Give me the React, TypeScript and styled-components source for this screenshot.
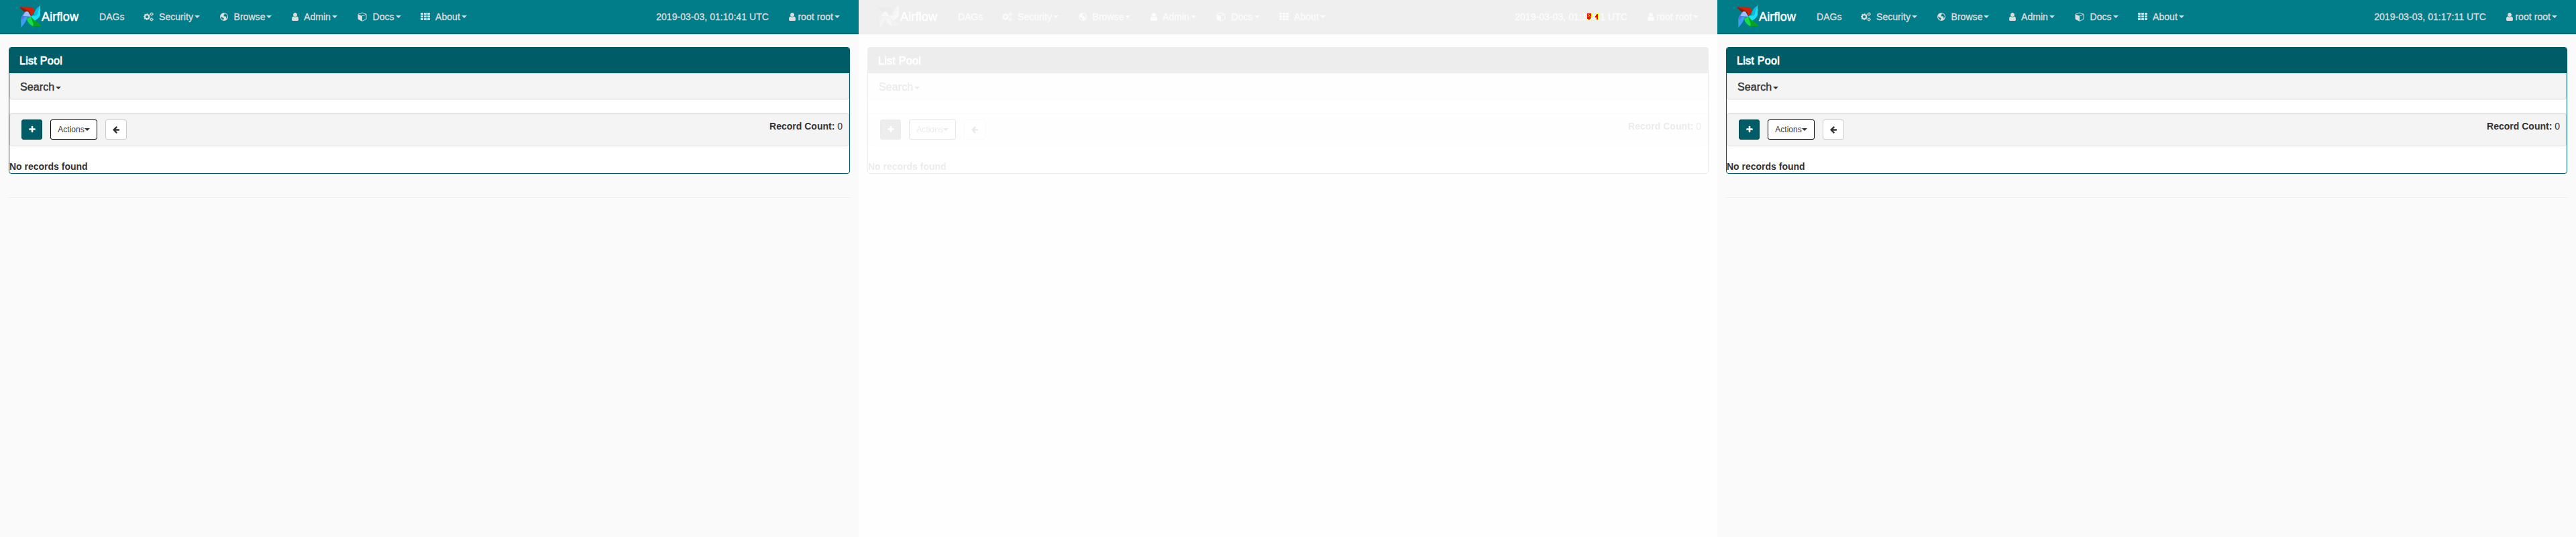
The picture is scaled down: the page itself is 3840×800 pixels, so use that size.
import React from "react";
import styled, { createGlobalStyle, css } from "styled-components";

const GlobalStyle = createGlobalStyle`
  * { box-sizing: border-box; }
  body {
    margin: 0;
    background: #fff;
    font-family: "Liberation Sans", Arial, sans-serif;
    font-size: 14px;
    line-height: 20px;
    color: #333;
  }
`;

const Strip = styled.div`
  display: flex;
  width: 3840px;
  height: 800px;
  overflow: hidden;
`;

const Screen = styled.section<{ $faded?: boolean }>`
  width: 1280px;
  height: 800px;
  background: #fafafa;
  ${(p) => p.$faded && css`filter: grayscale(1) opacity(0.1);`}
`;

const FadedSlot = styled.div`
  position: relative;
  width: 1280px;
  height: 800px;
`;

const MarkLayer = styled.svg`
  position: absolute;
  left: 1085px;
  top: 20px;
`;

const Navbar = styled.nav`
  display: flex;
  align-items: center;
  height: 51px;
  padding: 0 28px 0 29px;
  background: #017c89;
  border-bottom: 1px solid #005660;
  color: #ddd;
`;

const Brand = styled.a`
  display: flex;
  align-items: center;
  width: 119px;
  color: #fff;
`;

const BrandName = styled.span`
  font-size: 18px;
  letter-spacing: 0.15px;
  -webkit-text-stroke: 0.5px currentColor;
`;

const NavItem = styled.a<{ $width?: number }>`
  display: flex;
  align-items: center;
  white-space: nowrap;
  width: ${(p) => (p.$width ? `${p.$width}px` : "auto")};
  letter-spacing: 0.05px;
  -webkit-text-stroke: 0.35px currentColor;
`;

const IconSlot = styled.span<{ $width: number }>`
  display: flex;
  align-items: center;
  width: ${(p) => p.$width}px;
  height: 16px;
`;

const Caret = styled.span<{ $gap?: number }>`
  display: inline-block;
  margin-left: ${(p) => p.$gap ?? 2}px;
  border-top: 4px solid currentColor;
  border-left: 4px solid transparent;
  border-right: 4px solid transparent;
  vertical-align: middle;
`;

const NavRight = styled.div`
  display: flex;
  margin-left: auto;
  gap: 28px;
`;

const Content = styled.main`
  padding: 19px 13px 0;
`;

const Panel = styled.div`
  height: 189px;
  background: #fff;
  border: 1px solid #005c66;
  border-radius: 4px;
  overflow: hidden;
`;

const PanelHeading = styled.h4`
  height: 38px;
  margin: 0;
  padding: 10px 15px;
  background: #005c66;
  color: #fff;
  font-size: 16px;
  font-weight: 400;
  line-height: 20px;
  letter-spacing: 0.3px;
  -webkit-text-stroke: 0.75px currentColor;
`;

const SearchBar = styled.div`
  height: 39px;
  padding: 10px 15px 0;
  background: #f4f4f4;
  border: 1px solid #ddd;
  border-radius: 4px;
  box-shadow: 0 1px 1px rgba(0, 0, 0, 0.05);
  font-size: 16px;
  letter-spacing: 0.1px;
  -webkit-text-stroke: 0.4px currentColor;
`;

const Toolbar = styled.div`
  display: flex;
  height: 50px;
  margin-top: 20px;
  padding: 9px 9px 9px 17px;
  background: #f4f4f4;
  border: 1px solid #e0e0e0;
  border-radius: 4px;
  box-shadow: inset 0 1px 1px rgba(0, 0, 0, 0.05);
`;

const Button = styled.button<{ $tone: "primary" | "outline" | "plain"; $width: number }>`
  display: flex;
  align-items: center;
  justify-content: center;
  width: ${(p) => p.$width}px;
  height: 30px;
  margin-right: 12px;
  padding: 0;
  font: 12px "Liberation Sans", Arial, sans-serif;
  border-radius: 3px;
  color: ${(p) => (p.$tone === "primary" ? "#fff" : "#333")};
  background: ${(p) => (p.$tone === "primary" ? "#005c66" : "#fff")};
  border: 1px solid ${(p) => ({ primary: "#00434a", outline: "#000", plain: "#ccc" })[p.$tone]};
`;

const RecordCount = styled.div`
  margin-left: auto;
`;

const Empty = styled.b`
  display: block;
  margin-top: 20px;
`;

const Rule = styled.hr`
  height: 1px;
  margin: 35px 0 0;
  border: 0;
  background: #eee;
`;

const Pinwheel = () => (
  <svg width="33" height="34" viewBox="0 0 33 34">
    <path d="M0.3 2.2L18.3 2.7Q22 5 23 8.5L17 16L12 11Q4 9 0.3 2.2Z" fill="#d3200a" />
    <path d="M0.3 2.2L11 7Q17 9 17 16L12 11.5Q4 9 0.3 2.2Z" fill="#8a1d10" />
    <path d="M31 0V14Q30 19 22 23L17 16.5L22 14Q22 7 31 0Z" fill="#13e4f7" />
    <path d="M31 0Q22 7 22 14L17 16.5L26 15Q28 8 31 0Z" fill="#0fb9dc" />
    <path d="M17 16.5L22 22Q28 25 32.8 30.7L20 31Q13 28 11 20Z" fill="#07a41b" />
    <path d="M17 16.5L19 23Q22 28 20 31Q13 28 11 20Z" fill="#14dc4b" />
    <path d="M17 16.5L12 18Q9 26 2.3 33V20Q4 13 10 9L13 9.5Z" fill="#3f9df8" />
    <path d="M17 16.5L8 17L2.3 23V20Q4 13 10 9L13 9.5Z" fill="#5577d8" />
    <path d="M17 16.5L5.5 16Q7 11 10 9L13 9.5Z" fill="#9cc0f5" />
  </svg>
);

const Glyph = ({ d, size = 14 }: { d: string; size?: number }) => (
  <svg width={size} height={size} viewBox="0 0 1792 1792" fill="currentColor">
    <path d={d} />
  </svg>
);

const userPath =
  "M1536 1399q0 109-62.5 187t-150.5 78h-854q-88 0-150.5-78t-62.5-187q0-85 8.5-160.5t31.5-152 58.5-131 94-89 134.5-34.5q131 128 313 128t313-128q76 0 134.5 34.5t94 89 58.5 131 31.5 152 8.5 160.5zm-256-887q0 159-112.5 271.5t-271.5 112.5-271.5-112.5-112.5-271.5 112.5-271.5 271.5-112.5 271.5 112.5 112.5 271.5z";
const plusPath =
  "M1600 736v192q0 40-28 68t-68 28h-416v416q0 40-28 68t-68 28h-192q-40 0-68-28t-28-68v-416h-416q-40 0-68-28t-28-68v-192q0-40 28-68t68-28h416v-416q0-40 28-68t68-28h192q40 0 68 28t28 68v416h416q40 0 68 28t28 68z";
const arrowPath =
  "M1664 896v128q0 53-32.5 90.5t-84.5 37.5h-704l293 294q38 36 38 90t-38 90l-75 76q-37 37-90 37-52 0-91-37l-651-652q-37-37-37-90 0-52 37-91l651-650q38-38 91-38 52 0 90 38l75 74q38 38 38 91t-38 91l-293 293h704q52 0 84.5 37.5t32.5 90.5z";

const Gears = () => (
  <svg width="15" height="14" viewBox="0 0 15 14" fill="none" stroke="currentColor">
    <circle cx="5" cy="7" r="3.1" strokeWidth="2" />
    <circle cx="5" cy="7" r="4.5" strokeWidth="1.2" strokeDasharray="1.77 1.77" strokeDashoffset="0.9" />
    <circle cx="12" cy="3" r="1.5" strokeWidth="1.1" />
    <circle cx="12" cy="3" r="2.4" strokeWidth="0.8" strokeDasharray="1.26 1.26" />
    <circle cx="12" cy="11" r="1.5" strokeWidth="1.1" />
    <circle cx="12" cy="11" r="2.4" strokeWidth="0.8" strokeDasharray="1.26 1.26" />
  </svg>
);

const Globe = () => (
  <svg width="12" height="12" viewBox="0 0 12 12" fill="currentColor">
    <path
      fillRule="evenodd"
      d="M6 0A6 6 0 1 1 6 12A6 6 0 1 1 6 0ZM7.2 1.2L6 1.8L6.6 2.8L5.2 4L6.4 5.4L8 5.2L9.4 6.4L9 8L10 8.6Q11.6 6.2 10.6 3.8Q9.4 1.6 7.2 1.2ZM1.2 5.2L1.4 7.6Q2.6 10.2 5.4 10.9L5 9.4L5.8 8.4L4.2 7.2L2.6 6.8Z"
    />
  </svg>
);

const Cube = () => (
  <svg width="14" height="14" viewBox="0 0 14 14">
    <path d="M7 1L13 3.2V10.4L7 13.4L1 10.4V3.2Z" fill="none" stroke="currentColor" strokeLinejoin="round" />
    <path d="M1 3.4L7 5.7V13.3L1 10.4Z" fill="currentColor" />
    <path d="M7 5.7L13 3.4" stroke="currentColor" />
  </svg>
);

const Grid = () => (
  <svg width="14" height="12" viewBox="0 0 14 12" fill="currentColor">
    {[0, 5, 10].map((x) =>
      [0, 4, 8].map((y) => <rect key={`${x}-${y}`} x={x} y={y} width="4" height="3" rx="0.7" />)
    )}
  </svg>
);

const menus = [
  { label: "Security", icon: <Gears />, slot: 23, width: 114 },
  { label: "Browse", icon: <Globe />, slot: 20.5, width: 105 },
  { label: "Admin", icon: <Glyph d={userPath} />, slot: 20, width: 100 },
  { label: "Docs", icon: <Cube />, slot: 22.5, width: 94 },
  { label: "About", icon: <Grid />, slot: 22, width: 80 },
];

/* Changed pixels of the clock: Y is the fringe, R the core. */
const marks = [
  "YRRRRRRY.......YYY.",
  "YRYRRRRY......YRRY.",
  "YRRYRRRY.....YRRRY.",
  "YRRRYRRY.....YRRRY.",
  "YRRYRRYY....YRRRRY.",
  "YRRRRRRY....YRRRRYY",
  "YRRRRRY.....YYYRRYY",
  "YRRRRRY.......YRRY.",
  ".YRRRY........YRRY.",
  "..YYY.........YYYY.",
];

const ChangeMarks = () => (
  <MarkLayer width="19" height="10" shapeRendering="crispEdges">
    {marks.flatMap((row, y) =>
      [...row].map((c, x) =>
        c === "." ? null : (
          <rect key={`${x}-${y}`} x={x} y={y} width="1" height="1" fill={c === "R" ? "#f00" : "#ff0"} />
        )
      )
    )}
  </MarkLayer>
);

const PoolScreen = ({ time, faded }: { time: string; faded?: boolean }) => (
  <Screen $faded={faded}>
    <Navbar>
      <Brand>
        <Pinwheel />
        <BrandName>Airflow</BrandName>
      </Brand>
      <NavItem $width={66}>DAGs</NavItem>
      {menus.map((m) => (
        <NavItem key={m.label} $width={m.width}>
          <IconSlot $width={m.slot}>{m.icon}</IconSlot>
          {m.label}
          <Caret />
        </NavItem>
      ))}
      <NavRight>
        <NavItem>{time}</NavItem>
        <NavItem>
          <IconSlot $width={15.5}><Glyph d={userPath} /></IconSlot>
          root root
          <Caret />
        </NavItem>
      </NavRight>
    </Navbar>
    <Content>
      <Panel>
        <PanelHeading>List Pool</PanelHeading>
        <SearchBar>Search<Caret /></SearchBar>
        <Toolbar>
          <Button $tone="primary" $width={31}><Glyph d={plusPath} size={12} /></Button>
          <Button $tone="outline" $width={70}>Actions<Caret $gap={0} /></Button>
          <Button $tone="plain" $width={32}><Glyph d={arrowPath} size={12} /></Button>
          <RecordCount><b>Record Count:</b> 0</RecordCount>
        </Toolbar>
        <Empty>No records found</Empty>
      </Panel>
      <Rule />
    </Content>
  </Screen>
);

export default function App() {
  return (
    <>
      <GlobalStyle />
      <Strip>
        <PoolScreen time="2019-03-03, 01:10:41 UTC" />
        <FadedSlot>
          <PoolScreen time="2019-03-03, 01:10:41 UTC" faded />
          <ChangeMarks />
        </FadedSlot>
        <PoolScreen time="2019-03-03, 01:17:11 UTC" />
      </Strip>
    </>
  );
}
